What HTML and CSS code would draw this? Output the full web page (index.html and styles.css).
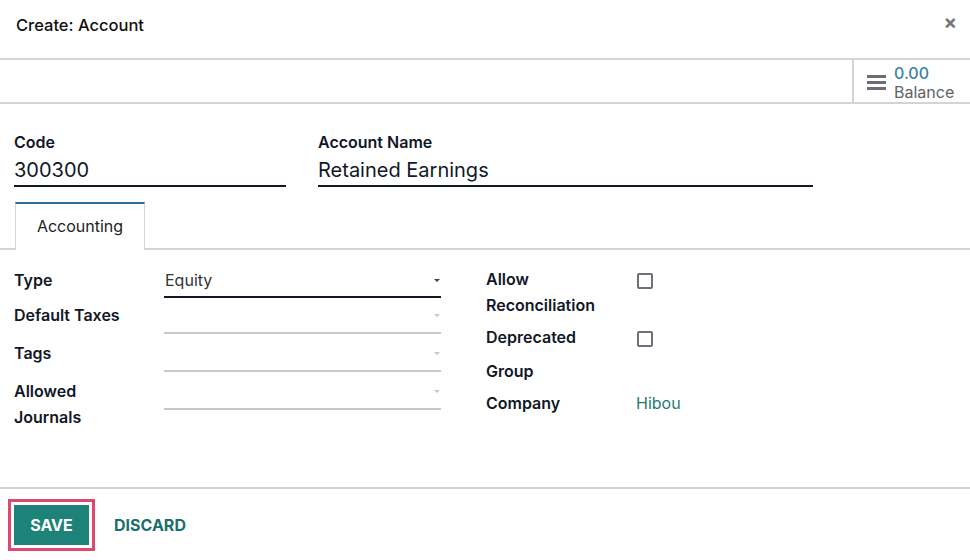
FILE: index.html
```html
<!DOCTYPE html>
<html lang="en">
<head>
<meta charset="UTF-8">
<title>Create: Account</title>
<link rel="stylesheet" href="styles.css">
</head>
<body>
<div class="modal">
    <div class="modal-header">
        <h4 class="modal-title">Create: Account</h4>
        <span class="close">&times;</span>
    </div>

    <div class="button-box">
        <div class="stat-button">
            <svg class="stat-icon" width="19" height="16" viewBox="0 0 19 16">
                <rect x="0" y="1" width="19" height="3" fill="#6b6e74"/>
                <rect x="0" y="7" width="19" height="3" fill="#6b6e74"/>
                <rect x="0" y="13" width="19" height="3" fill="#6b6e74"/>
            </svg>
            <div class="stat-info">
                <span class="stat-value">0.00</span>
                <span class="stat-text">Balance</span>
            </div>
        </div>
    </div>

    <div class="sheet">
        <div class="title-row">
            <div class="title-field code">
                <label>Code</label>
                <div class="big-input">300300</div>
            </div>
            <div class="title-field name">
                <label>Account Name</label>
                <div class="big-input">Retained Earnings</div>
            </div>
        </div>

        <div class="tabs">
            <div class="tab active">Accounting</div>
        </div>

        <div class="tab-pane">
            <div class="group left">
                <div class="lbl">Type</div>
                <div class="select filled">Equity<span class="caret"></span></div>
                <div class="lbl">Default Taxes</div>
                <div class="select"><span class="caret"></span></div>
                <div class="lbl">Tags</div>
                <div class="select"><span class="caret"></span></div>
                <div class="lbl">Allowed<br>Journals</div>
                <div class="select"><span class="caret"></span></div>
            </div>
            <div class="group right">
                <div class="lbl">Allow<br>Reconciliation</div>
                <div class="val"><span class="checkbox"></span></div>
                <div class="lbl">Deprecated</div>
                <div class="val"><span class="checkbox"></span></div>
                <div class="lbl">Group</div>
                <div class="val"></div>
                <div class="lbl">Company</div>
                <div class="val link">Hibou</div>
            </div>
        </div>
    </div>

    <div class="modal-footer">
        <button class="btn btn-primary">SAVE</button>
        <button class="btn btn-link">DISCARD</button>
    </div>
</div>
</body>
</html>
```

FILE: styles.css
```css
body, html {
    margin: 0;
    height: 100%;
    font-family: Inter, Roboto, "Liberation Sans", Arial, sans-serif;
    background: #fff;
    color: #111827;
}
.modal {
    width: 970px;
    height: 560px;
    overflow: hidden;
}
.modal-header {
    height: 58px;
    display: flex;
    align-items: center;
    justify-content: space-between;
    padding: 0 16px;
    border-bottom: 2px solid #d2d4d8;
}
.modal-title {
    margin: 0;
    font-size: 16.5px;
    font-weight: 500;
    color: #111;
    padding-bottom: 9px;
}
.close {
    font-size: 20px;
    color: #777;
    font-weight: 700;
    margin-right: -3px;
    padding-bottom: 14px;
}
.button-box {
    height: 42px;
    display: flex;
    justify-content: flex-end;
    border-bottom: 2px solid #d2d4d8;
}
.stat-button {
    width: 118px;
    display: flex;
    align-items: center;
    border-left: 2px solid #d2d4d8;
    padding-left: 13px;
    box-sizing: border-box;
}
.stat-icon {
    margin-right: 8px;
    margin-top: 2px;
}
.stat-info {
    display: flex;
    flex-direction: column;
    line-height: 19px;
    margin-top: 3px;
}
.stat-value {
    color: #3a7fab;
    font-weight: 500;
    font-size: 16px;
}
.stat-text {
    color: #5f6368;
    font-size: 16px;
}
.sheet {
    padding: 0 14px;
}
.title-row {
    display: flex;
    gap: 32px;
    padding-top: 28px;
}
.title-field label {
    display: block;
    font-weight: 600;
    font-size: 16px;
    line-height: 20px;
    margin-bottom: 3px;
}
.title-field.code {
    width: 272px;
}
.title-field.name {
    width: 495px;
}
.big-input {
    font-size: 20px;
    line-height: 30px;
    height: 30px;
    border-bottom: 2px solid #111827;
}
.tabs {
    margin: 15px -14px 0;
    padding-left: 15px;
    border-bottom: 2px solid #d2d4d8;
    display: flex;
}
.tab {
    width: 130px;
    height: 48px;
    box-sizing: border-box;
    display: flex;
    align-items: center;
    justify-content: center;
    font-size: 16px;
    color: #222;
    border: 1px solid #d2d4d8;
    border-top: 2px solid #2a6b9a;
    border-bottom: none;
    margin-bottom: -2px;
    padding-bottom: 2px;
    background: #fff;
}
.tab-pane {
    display: flex;
    align-items: flex-start;
    padding-top: 17px;
}
.group {
    display: grid;
    align-items: start;
    align-content: start;
}
.group.left {
    grid-template-columns: 150px 277px;
    width: 472px;
}
.group.right {
    grid-template-columns: 150px 200px;
    row-gap: 6px;
    margin-top: -1px;
}
.lbl {
    font-weight: 600;
    font-size: 16px;
    line-height: 26px;
}
.select {
    position: relative;
    height: 30px;
    line-height: 26px;
    font-size: 16px;
    color: #333;
    padding-left: 1px;
    border-bottom: 2px solid #c8c8c8;
    margin-bottom: 6px;
}
.select.filled {
    height: 29px;
    margin-bottom: 4px;
    border-bottom-color: #111827;
}
.caret {
    position: absolute;
    right: 1px;
    top: 12px;
    border-left: 3px solid transparent;
    border-right: 3px solid transparent;
    border-top: 3px solid #c8c8c8;
}
.select.filled .caret {
    border-top-color: #444;
}
.val {
    line-height: 26px;
    font-size: 16px;
    min-height: 26px;
}
.val.link {
    color: #1f7a74;
}
.checkbox {
    display: block;
    width: 12px;
    height: 12px;
    border: 2px solid #6c7078;
    border-radius: 2px;
    margin: 7px 0 5px 1px;
}
.modal-footer {
    position: absolute;
    top: 487px;
    left: 0;
    width: 970px;
    border-top: 2px solid #d2d4d8;
    display: flex;
    align-items: center;
    padding: 16px 14px;
    box-sizing: border-box;
}
.btn {
    font-family: Inter, Roboto, "Liberation Sans", Arial, sans-serif;
    font-size: 16px;
    font-weight: 700;
    border: none;
    cursor: pointer;
    padding: 0;
}
.btn-primary {
    width: 75px;
    height: 40px;
    background: #1d8278;
    color: #fff;
    outline: 3px solid #dc4a6f;
    outline-offset: 3px;
}
.btn-link {
    background: none;
    color: #1d6f6a;
    margin-left: 25px;
}
```
